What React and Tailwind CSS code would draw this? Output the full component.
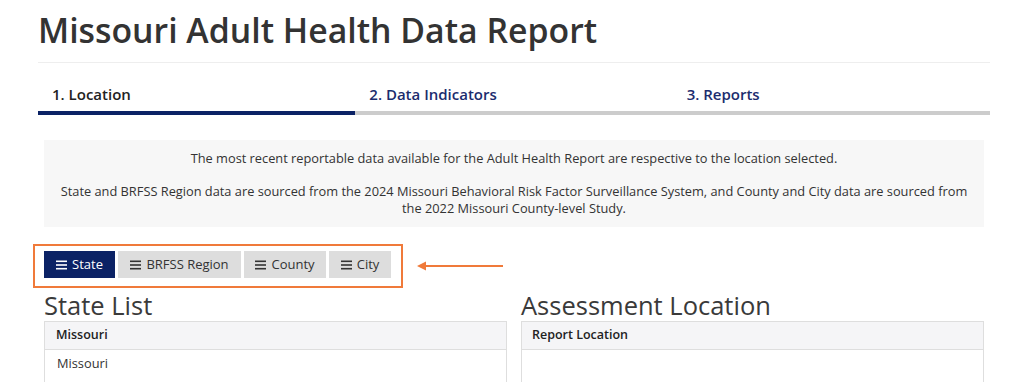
import React from "react";

const Bars = () => (
  <svg width="11" height="10" viewBox="0 0 11 10" className="inline-block mr-[5px]" fill="currentColor">
    <rect x="0" y="0.5" width="11" height="1.6" />
    <rect x="0" y="4.2" width="11" height="1.6" />
    <rect x="0" y="7.9" width="11" height="1.6" />
  </svg>
);

export default function App() {
  const font = { fontFamily: '"Open Sans", "Liberation Sans", sans-serif' };
  return (
    <div className="w-[1024px] h-[382px] overflow-hidden bg-white text-[#333]" style={font}>
      <div className="pl-[38px] pr-[34px]">
        <h1 className="pt-[8px] text-[33.8px] leading-[44px] font-semibold text-[#333]">
          Missouri Adult Health Data Report
        </h1>
        <div className="mt-[10px] h-px bg-[#eeeeee]" />
        <div className="mt-[21px] grid grid-cols-3">
          <div className="flex flex-col">
            <div className="pl-[14px] text-[15px] leading-[20px] font-semibold text-[#222]">1. Location</div>
            <div className="mt-[7px] h-[4px] bg-[#0b2265]" />
          </div>
          <div className="flex flex-col">
            <div className="pl-[14px] text-[15px] leading-[20px] font-semibold text-[#1b2c6e]">2. Data Indicators</div>
            <div className="mt-[7px] h-[4px] bg-[#cccccc]" />
          </div>
          <div className="flex flex-col">
            <div className="pl-[14px] text-[15px] leading-[20px] font-semibold text-[#1b2c6e]">3. Reports</div>
            <div className="mt-[7px] h-[4px] bg-[#cccccc]" />
          </div>
        </div>
      </div>
      <div className="mx-[44px] mt-[25px] w-[940px] bg-[#f7f7f7] py-[10px] text-center text-[12.8px] leading-[17px] text-[#333]">
        <p>The most recent reportable data available for the Adult Health Report are respective to the location selected.</p>
        <p className="mt-[16px] px-[12px]">
          State and BRFSS Region data are sourced from the 2024 Missouri Behavioral Risk Factor Surveillance System, and County and City data are sourced from the 2022 Missouri County-level Study.
        </p>
      </div>
      <div className="mt-[17px] ml-[33px] flex items-center">
        <div className="w-[370px] h-[44px] border-2 border-[#f07a3a] flex items-start pt-[5px] pl-[9px] gap-[3px]">
          <button className="h-[27px] w-[71px] bg-[#0b2265] text-white text-[13px] flex items-center justify-center">
            <Bars />State
          </button>
          <button className="h-[27px] w-[123px] bg-[#dddddd] text-[#333] text-[13px] flex items-center justify-center">
            <Bars />BRFSS Region
          </button>
          <button className="h-[27px] w-[82px] bg-[#dddddd] text-[#333] text-[13px] flex items-center justify-center">
            <Bars />County
          </button>
          <button className="h-[27px] w-[62px] bg-[#dddddd] text-[#333] text-[13px] flex items-center justify-center">
            <Bars />City
          </button>
        </div>
        <svg width="90" height="12" viewBox="0 0 90 12" className="ml-[14px] mt-[-1px]">
          <line x1="6" y1="6" x2="86" y2="6" stroke="#f07a3a" strokeWidth="2" />
          <polygon points="0,6 9,1.5 9,10.5" fill="#f07a3a" />
        </svg>
      </div>
      <div className="ml-[44px] w-[940px] mt-[1px] grid grid-cols-2 gap-[14px]">
        <div>
          <h2 className="text-[25.5px] leading-[32px] text-[#3a3a3a]">State List</h2>
          <div className="border border-[#dedede]">
            <div className="h-[28px] bg-[#f5f5f7] border-b border-[#dedede] flex items-center pl-[11px] text-[12.5px] font-semibold text-[#222]">Missouri</div>
            <div className="h-[40px] pl-[12px] pt-[4px] text-[12.8px] text-[#333]">Missouri</div>
          </div>
        </div>
        <div>
          <h2 className="text-[25.5px] leading-[32px] text-[#3a3a3a]">Assessment Location</h2>
          <div className="border border-[#dedede]">
            <div className="h-[28px] bg-[#f5f5f7] border-b border-[#dedede] flex items-center pl-[10px] text-[12.5px] font-semibold text-[#222]">Report Location</div>
            <div className="h-[40px]" />
          </div>
        </div>
      </div>
    </div>
  );
}
